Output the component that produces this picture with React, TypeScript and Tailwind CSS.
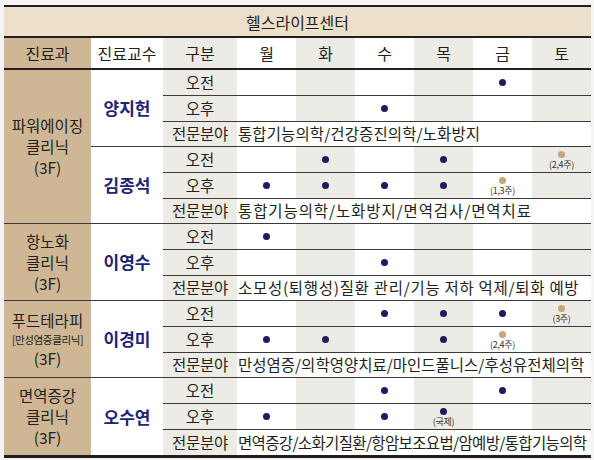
import type { ReactNode } from 'react'

// 헬스라이프센터 진료 시간표

type Slot = { c: 'n' | 't'; note?: string } | null

const _: Slot = null
const N: Slot = { c: 'n' }
const T = (note: string): Slot => ({ c: 't', note })

interface Doctor {
  name: string
  am: Slot[]
  pm: Slot[]
  spec: string
  track: string
}

interface Dept {
  label: ReactNode
  doctors: Doctor[]
}

const days = ['월', '화', '수', '목', '금', '토']

const depts: Dept[] = [
  {
    label: (
      <>
        <div>파워에이징</div>
        <div>클리닉</div>
        <div>(3F)</div>
      </>
    ),
    doctors: [
      {
        name: '양지헌',
        am: [_, _, _, _, N, _],
        pm: [_, _, N, _, _, _],
        spec: '통합기능의학/건강증진의학/노화방지',
        track: 'tracking-[0.1px]'
      },
      {
        name: '김종석',
        am: [_, N, _, N, _, T('(2,4주)')],
        pm: [N, N, N, N, T('(1,3주)'), _],
        spec: '통합기능의학/노화방지/면역검사/면역치료',
        track: 'tracking-[0.9px]'
      }
    ]
  },
  {
    label: (
      <>
        <div>항노화</div>
        <div>클리닉</div>
        <div>(3F)</div>
      </>
    ),
    doctors: [
      {
        name: '이영수',
        am: [N, _, _, _, _, _],
        pm: [_, _, N, _, _, _],
        spec: '소모성(퇴행성)질환 관리/기능 저하 억제/퇴화 예방',
        track: 'tracking-[0.7px]'
      }
    ]
  },
  {
    label: (
      <>
        <div>푸드테라피</div>
        <div className="text-[10.5px] leading-[17px] tracking-[-0.4px]">[만성염증클리닉]</div>
        <div>(3F)</div>
      </>
    ),
    doctors: [
      {
        name: '이경미',
        am: [_, _, N, N, N, T('(3주)')],
        pm: [N, N, _, N, T('(2,4주)'), _],
        spec: '만성염증/의학영양치료/마인드풀니스/후성유전체의학',
        track: 'tracking-[0px]'
      }
    ]
  },
  {
    label: (
      <>
        <div>면역증강</div>
        <div>클리닉</div>
        <div>(3F)</div>
      </>
    ),
    doctors: [
      {
        name: '오수연',
        am: [_, _, N, _, N, _],
        pm: [N, _, N, { c: 'n', note: '(국제)' }, _, _],
        spec: '면역증강/소화기질환/항암보조요법/암예방/통합기능의학',
        track: 'tracking-[-0.65px]'
      }
    ]
  }
]

function DotCell({ slot, gray }: { slot: Slot; gray: boolean }) {
  const bg = gray ? 'bg-[#edebe6]' : 'bg-white'
  const line = 'border-b border-[#3a3a3a]'
  if (!slot) return <div className={`${bg} ${line}`} />
  const dot = slot.c === 'n' ? 'bg-[#1c1d5e]' : 'bg-[#c4a77b]'
  if (slot.note) {
    return (
      <div className={`${bg} ${line} flex flex-col items-center pt-[4px]`}>
        <div className={`w-[7px] h-[7px] rounded-full ${dot}`} />
        <div className="text-[9px] leading-[10px] mt-[2px] tracking-[-0.3px] text-[#333]">{slot.note}</div>
      </div>
    )
  }
  return (
    <div className={`${bg} ${line} flex items-center justify-center`}>
      <div className={`w-[7px] h-[7px] rounded-full ${dot}`} />
    </div>
  )
}

export default function App() {
  return (
    <div
      className="w-[594px] h-[460px] bg-[#f4f4f4] pt-[5px] pl-[4px] text-[#231f20]"
      style={{ fontFamily: '"Noto Sans CJK KR", "Noto Sans", sans-serif' }}
    >
      <div className="w-[587px] border-t-2 border-b-[3px] border-[#231f20] grid grid-cols-[87px_72px_74px_repeat(6,59px)] grid-rows-[31px_32px_repeat(5,26px_26px_25px)]">
        {/* 제목 */}
        <div className="col-span-9 bg-[#ece0cb] border-b-2 border-[#231f20] flex items-center justify-center text-[16px]">
          헬스라이프센터
        </div>

        {/* 헤더 */}
        <div className="bg-[#cfb694] border-b-2 border-[#231f20] flex items-center justify-center text-[16px]">진료과</div>
        <div className="bg-white border-b-2 border-[#231f20] flex items-center justify-center text-[16px]">진료교수</div>
        <div className="bg-[#edebe6] border-b-2 border-[#231f20] flex items-center justify-center text-[16px]">구분</div>
        {days.map((d, i) => (
          <div
            key={d}
            className={`${i % 2 ? 'bg-[#edebe6]' : 'bg-white'} border-b-2 border-[#231f20] flex items-center justify-center text-[16px]`}
          >
            {d}
          </div>
        ))}

        {/* 본문 */}
        {depts.map((dept, di) => {
          const lastDept = di === depts.length - 1
          return dept.doctors.map((doc, ki) => {
            const lastDoc = lastDept && ki === dept.doctors.length - 1
            return [
              ki === 0 && (
                <div
                  key={`dept-${di}`}
                  className={`${dept.doctors.length > 1 ? 'row-span-6' : 'row-span-3'} bg-[#cfb694] ${lastDept ? '' : 'border-b border-[#3a3a3a]'} flex flex-col items-center justify-center text-[15.5px] leading-[21px]`}
                >
                  {dept.label}
                </div>
              ),
              <div
                key={`doc-${doc.name}`}
                className={`row-span-3 bg-white ${lastDoc ? '' : 'border-b border-[#3a3a3a]'} flex items-center justify-center text-[17px] font-bold text-[#1f2374]`}
              >
                {doc.name}
              </div>,
              <div key={`am-${doc.name}`} className="bg-[#edebe6] border-b border-[#3a3a3a] flex items-center justify-center text-[15.5px]">
                오전
              </div>,
              ...doc.am.map((s, i) => <DotCell key={`am-${doc.name}-${i}`} slot={s} gray={i % 2 === 1} />),
              <div key={`pm-${doc.name}`} className="bg-[#edebe6] border-b border-[#3a3a3a] flex items-center justify-center text-[15.5px]">
                오후
              </div>,
              ...doc.pm.map((s, i) => <DotCell key={`pm-${doc.name}-${i}`} slot={s} gray={i % 2 === 1} />),
              <div
                key={`sp-${doc.name}`}
                className={`bg-[#edebe6] ${lastDoc ? '' : 'border-b border-[#3a3a3a]'} flex items-center justify-center text-[15.5px] tracking-[-0.3px]`}
              >
                전문분야
              </div>,
              <div
                key={`spt-${doc.name}`}
                className={`col-span-6 bg-white ${lastDoc ? '' : 'border-b border-[#3a3a3a]'} flex items-center pl-[1px] text-[15.5px] whitespace-nowrap ${doc.track}`}
              >
                {doc.spec}
              </div>
            ]
          })
        })}
      </div>
    </div>
  )
}
